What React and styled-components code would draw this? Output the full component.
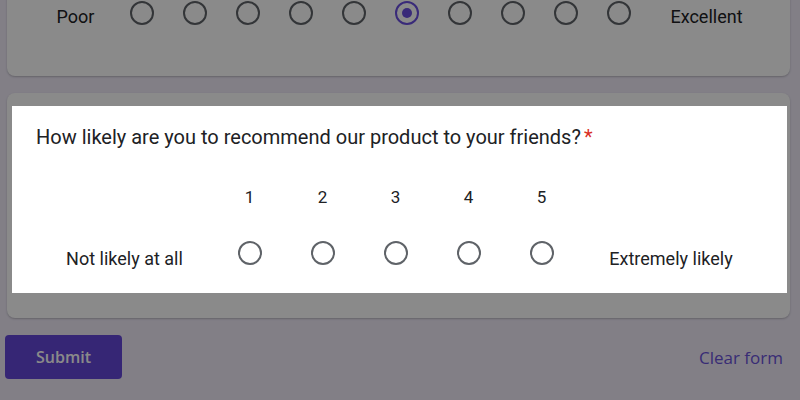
import styled, { createGlobalStyle } from "styled-components";

const GlobalStyle = createGlobalStyle`
  html, body {
    margin: 0;
    padding: 0;
    background: #f0ebf8;
    overflow: hidden;
    font-family: Roboto, "Liberation Sans", Arial, sans-serif;
    color: #202124;
  }
`;

const Page = styled.div`
  width: 800px;
  height: 400px;
  box-sizing: border-box;
  padding: 0 10px 0 5px;
  overflow: hidden;
`;

const Card = styled.div`
  margin-left: 2px;
  background: #fff;
  border-radius: 8px;
  box-shadow: 0 1px 2px rgba(60, 64, 67, 0.3);
`;

const TopCard = styled(Card)`
  margin-top: -40px;
  padding: 38px 0 54px 29px;
`;

const QuestionCard = styled(Card)`
  margin-top: 17px;
  padding: 13px 3px 25px 5px;
`;

const Spotlight = styled.div`
  position: relative;
  z-index: 1;
  background: #fff;
  padding: 19px 0 16px 24px;
  box-shadow: 0 0 0 2000px rgba(0, 0, 0, 0.46);
`;

const Title = styled.div`
  font-size: 20px;
  line-height: 24px;
  color: #202124;
`;

const Star = styled.span`
  color: #d93025;
  margin-left: 3px;
`;

const Scale = styled.div`
  display: grid;
  grid-template-columns: ${(p) => p.$cols};
  align-items: center;
  justify-items: center;
`;

const Numbers = styled(Scale)`
  margin-top: 36px;
  height: 24px;
  font-size: 17px;
`;

const RadioRow = styled(Scale)`
  margin-top: 20px;
  height: 48px;
`;

const TopRow = styled(Scale)`
  height: 24px;
`;

const EndLabel = styled.span`
  font-size: 18px;
  padding-top: ${(p) => p.$shift || 10}px;
  white-space: nowrap;
`;

const Radio = styled.span`
  width: 20px;
  height: 20px;
  border: 2px solid ${(p) => (p.$checked ? "#6a4ee0" : "#5f6368")};
  border-radius: 50%;
  display: flex;
  align-items: center;
  justify-content: center;

  &::after {
    content: "";
    width: 10px;
    height: 10px;
    border-radius: 50%;
    background: #6a4ee0;
    display: ${(p) => (p.$checked ? "block" : "none")};
  }
`;

const Footer = styled.div`
  margin-top: 17px;
  padding-right: 7px;
  display: flex;
  align-items: center;
  justify-content: space-between;
`;

const SubmitButton = styled.button`
  width: 117px;
  height: 44px;
  border: none;
  border-radius: 4px;
  background: #6447d8;
  color: #fff;
  font-family: "Open Sans", Roboto, sans-serif;
  font-weight: 600;
  font-size: 16px;
`;

const ClearLink = styled.span`
  font-family: "Open Sans", Roboto, sans-serif;
  font-weight: 500;
  font-size: 17px;
  color: #6a52d8;
`;

const topCols = "79px repeat(10, 53px) 123px";
const scaleCols = "177px repeat(5, 73px) 186px";

export default function App() {
  return (
    <>
      <GlobalStyle />
      <Page>
        <TopCard>
          <TopRow $cols={topCols}>
            <EndLabel $shift={8}>Poor</EndLabel>
            {Array.from({ length: 10 }, (_, i) => (
              <Radio key={i} $checked={i === 5} />
            ))}
            <EndLabel $shift={8}>Excellent</EndLabel>
          </TopRow>
        </TopCard>

        <QuestionCard>
          <Spotlight>
            <Title>
              How likely are you to recommend our product to your friends?
              <Star>*</Star>
            </Title>
            <Numbers $cols={scaleCols}>
              <span />
              {[1, 2, 3, 4, 5].map((n) => (
                <span key={n}>{n}</span>
              ))}
              <span />
            </Numbers>
            <RadioRow $cols={scaleCols}>
              <EndLabel>Not likely at all</EndLabel>
              {[1, 2, 3, 4, 5].map((n) => (
                <Radio key={n} />
              ))}
              <EndLabel>Extremely likely</EndLabel>
            </RadioRow>
          </Spotlight>
        </QuestionCard>

        <Footer>
          <SubmitButton>Submit</SubmitButton>
          <ClearLink>Clear form</ClearLink>
        </Footer>
      </Page>
    </>
  );
}
